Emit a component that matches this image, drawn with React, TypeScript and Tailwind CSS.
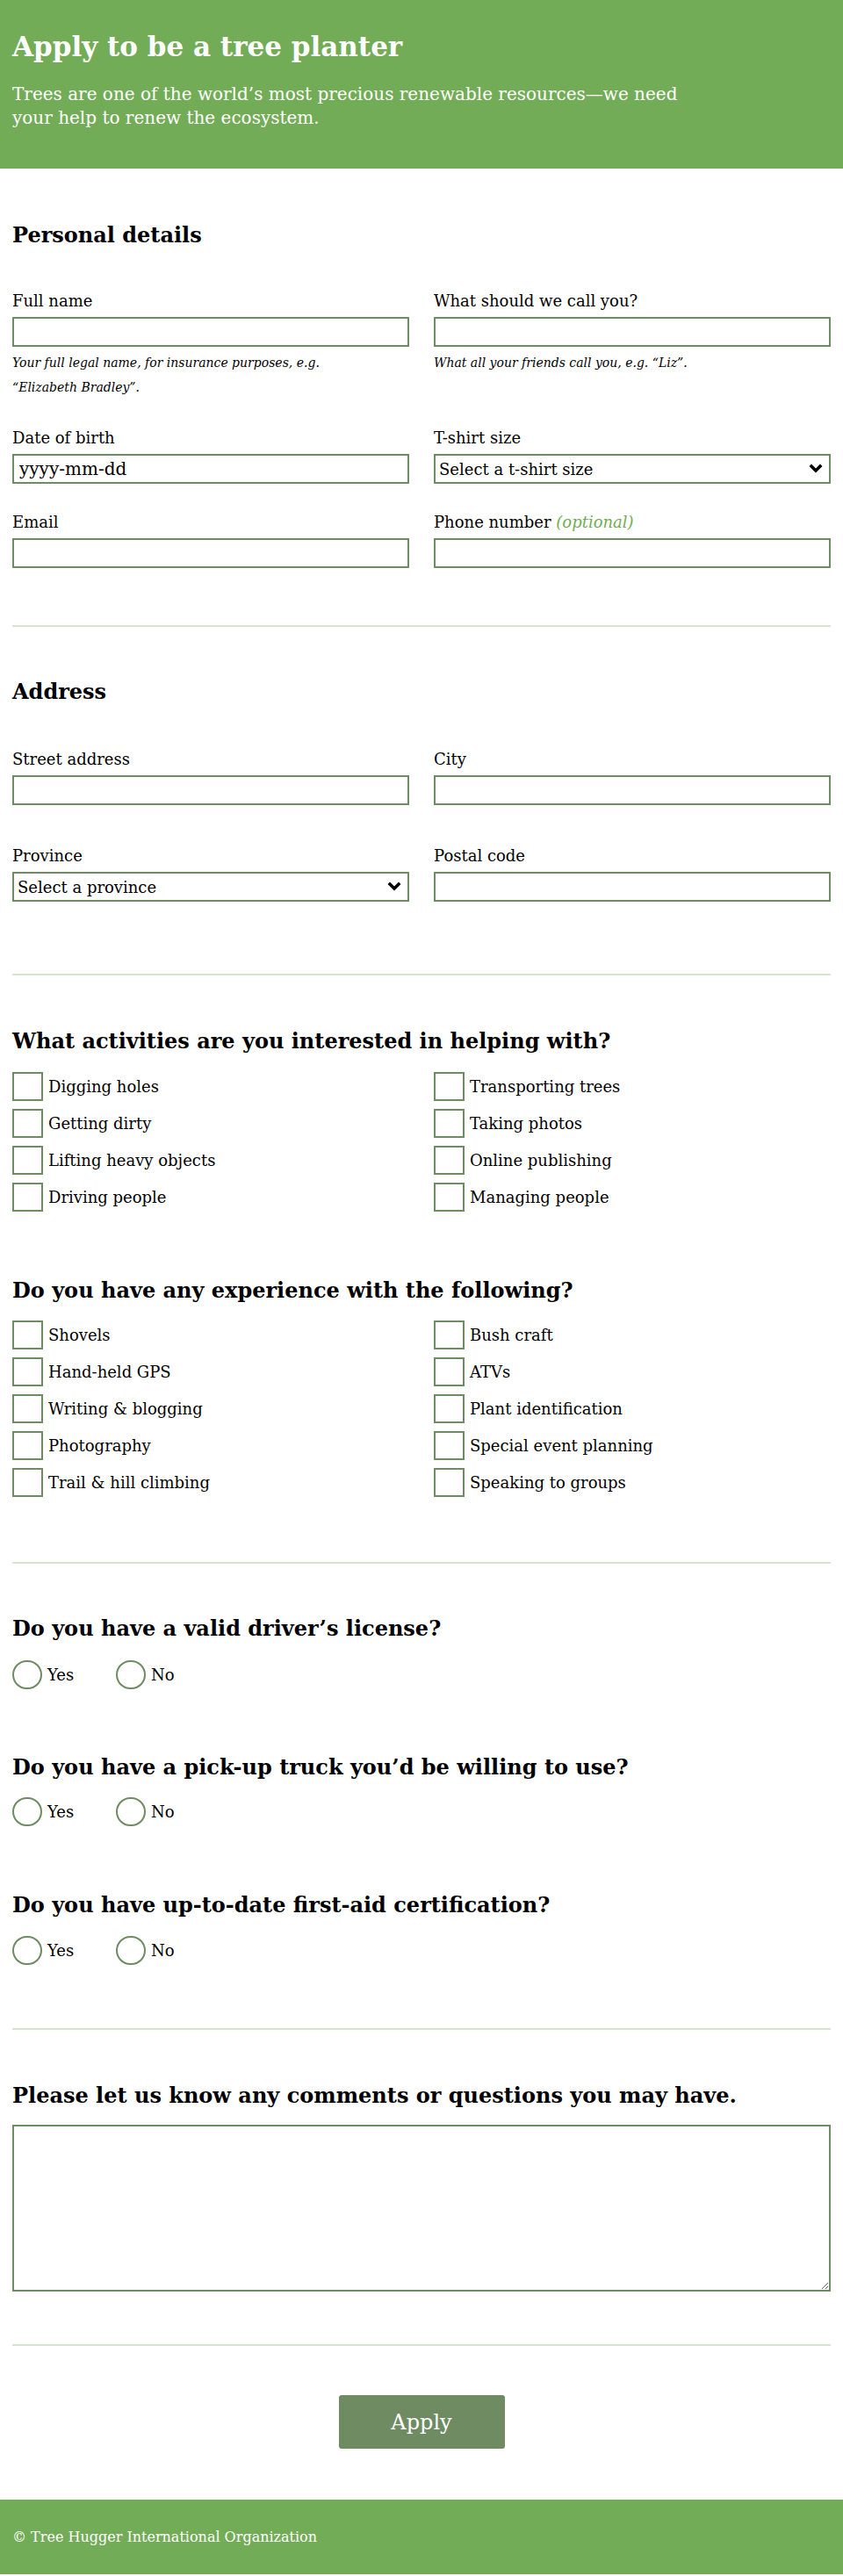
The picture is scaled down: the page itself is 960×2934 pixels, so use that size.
import React from 'react';

const field =
  'block w-full h-[34px] border-2 border-[#6e8b62] bg-white px-[6px] text-[18px] text-black outline-none';

const Field = ({
  label,
  optional,
  help,
  children,
}: {
  label: string;
  optional?: boolean;
  help?: React.ReactNode;
  children?: React.ReactNode;
}) => (
  <div>
    <label className="block text-[18px] leading-[24px]">
      {label}
      {optional && <em className="text-[#72ac56]"> (optional)</em>}
    </label>
    <div className="mt-[6px]">{children ?? <input type="text" className={field} />}</div>
    {help && <p className="mt-[4px] max-w-[360px] text-[14px] italic leading-[28px]">{help}</p>}
  </div>
);

const Select = ({ text }: { text: string }) => (
  <div className="relative">
    <select className={field + ' appearance-none pl-[4px]'}>
      <option>{text}</option>
    </select>
    <svg
      className="pointer-events-none absolute right-[9px] top-[11px]"
      width="16"
      height="12"
      viewBox="0 0 16 12"
    >
      <path d="M0.5 3 L3 0.5 L8 5.5 L13 0.5 L15.5 3 L8 10.5 Z" fill="#000" />
    </svg>
  </div>
);

const Check = ({ text }: { text: string }) => (
  <label className="flex h-[33px] items-center gap-[6px] text-[18px] leading-[24px]">
    <input
      type="checkbox"
      className="m-0 h-[33px] w-[35px] shrink-0 appearance-none border-2 border-[#6e8b62] bg-white"
    />
    {text}
  </label>
);

const YesNo = ({ name }: { name: string }) => (
  <div className="flex">
    {['Yes', 'No'].map((o, i) => (
      <label
        key={o}
        className={
          'flex h-[33px] items-center gap-[6px] text-[18px] leading-[24px] ' + (i === 0 ? 'w-[118px]' : '')
        }
      >
        <input
          type="radio"
          name={name}
          className="m-0 h-[33px] w-[34px] shrink-0 appearance-none rounded-full border-2 border-[#6e8b62] bg-white"
        />
        {o}
      </label>
    ))}
  </div>
);

const H2 = ({ children, className = '' }: { children: React.ReactNode; className?: string }) => (
  <h2 className={'text-[24px] font-bold leading-[30px] ' + className}>{children}</h2>
);

const Rule = ({ className = '' }: { className?: string }) => (
  <hr className={'h-[2px] border-0 bg-[#d5e6cc] ' + className} />
);

const activities = [
  'Digging holes',
  'Transporting trees',
  'Getting dirty',
  'Taking photos',
  'Lifting heavy objects',
  'Online publishing',
  'Driving people',
  'Managing people',
];

const experience = [
  'Shovels',
  'Bush craft',
  'Hand-held GPS',
  'ATVs',
  'Writing & blogging',
  'Plant identification',
  'Photography',
  'Special event planning',
  'Trail & hill climbing',
  'Speaking to groups',
];

export default function App() {
  return (
    <div className="min-h-screen bg-white font-['DejaVu_Serif',serif] text-black">
      <header className="bg-[#72ac56] px-[14px] pb-[44px] pt-[33px] text-white">
        <h1 className="text-[31px] font-bold leading-[40px]">Apply to be a tree planter</h1>
        <p className="mt-[21px] text-[20px] leading-[27px]">
          Trees are one of the world’s most precious renewable resources—we need
          <br />
          your help to renew the ecosystem.
        </p>
      </header>

      <form className="px-[14px]" onSubmit={(e) => e.preventDefault()}>
        <H2 className="mt-[61px]">Personal details</H2>
        <div className="mt-[48px] grid grid-cols-2 gap-x-[28px] gap-y-[32px]">
          <Field
            label="Full name"
            help={
              <>
                Your full legal name, for insurance purposes, e.g.
                <br />
                “Elizabeth Bradley”.
              </>
            }
          />
          <Field label="What should we call you?" help="What all your friends call you, e.g. “Liz”." />
          <Field label="Date of birth">
            <input
              type="text"
              placeholder="yyyy-mm-dd"
              className={field + ' text-[20px] placeholder:text-black'}
            />
          </Field>
          <Field label="T-shirt size">
            <Select text="Select a t-shirt size" />
          </Field>
          <Field label="Email" />
          <Field label="Phone number" optional />
        </div>

        <Rule className="mt-[65px]" />

        <H2 className="mt-[59px]">Address</H2>
        <div className="mt-[50px] grid grid-cols-2 gap-x-[28px] gap-y-[46px]">
          <Field label="Street address" />
          <Field label="City" />
          <Field label="Province">
            <Select text="Select a province" />
          </Field>
          <Field label="Postal code" />
        </div>

        <Rule className="mt-[82px]" />

        <H2 className="mt-[60px]">What activities are you interested in helping with?</H2>
        <div className="mt-[20px] grid grid-cols-2 gap-x-[28px] gap-y-[9px]">
          {activities.map((a) => (
            <Check key={a} text={a} />
          ))}
        </div>

        <H2 className="mt-[75px]">Do you have any experience with the following?</H2>
        <div className="mt-[19px] grid grid-cols-2 gap-x-[28px] gap-y-[9px]">
          {experience.map((a) => (
            <Check key={a} text={a} />
          ))}
        </div>

        <Rule className="mt-[74px]" />

        <H2 className="mt-[59px]">Do you have a valid driver’s license?</H2>
        <div className="mt-[21px]">
          <YesNo name="license" />
        </div>
        <H2 className="mt-[74px]">Do you have a pick-up truck you’d be willing to use?</H2>
        <div className="mt-[19px]">
          <YesNo name="truck" />
        </div>
        <H2 className="mt-[75px]">Do you have up-to-date first-aid certification?</H2>
        <div className="mt-[20px]">
          <YesNo name="firstaid" />
        </div>

        <Rule className="mt-[72px]" />

        <H2 className="mt-[60px]">Please let us know any comments or questions you may have.</H2>
        <textarea className="mt-[18px] block h-[190px] w-full border-2 border-[#6e8b62] p-[6px] text-[18px] outline-none" />

        <Rule className="mt-[60px]" />

        <div className="mt-[56px] flex justify-center">
          <button
            type="submit"
            className="h-[61px] w-[189px] rounded-[3px] bg-[#6e8b62] text-[24px] text-white"
          >
            Apply
          </button>
        </div>
      </form>

      <footer className="mt-[58px] h-[85px] bg-[#72ac56] px-[14px] pt-[31px] text-white">
        <p className="text-[16px] leading-[24px]">© Tree Hugger International Organization</p>
      </footer>
    </div>
  );
}
